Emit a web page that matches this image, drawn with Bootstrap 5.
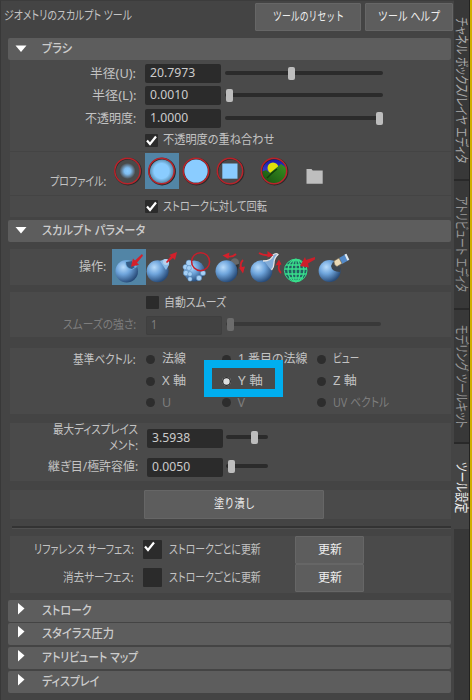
<!DOCTYPE html>
<html lang="ja">
<head>
<meta charset="utf-8">
<meta name="viewport" content="width=device-width, initial-scale=1">
<title>ジオメトリのスカルプト ツール</title>
<link href="https://cdn.jsdelivr.net/npm/bootstrap@5.3.0/dist/css/bootstrap.min.css" rel="stylesheet">
<style>
body{background:#444;color:#c3c3c3;font:12.5px/18px "Noto Sans","Noto Sans CJK JP",sans-serif;font-feature-settings:"palt";width:472px;height:700px;overflow:hidden}
.panel{width:454px;border-left:1px solid #383838;border-top:1px solid #3c3c3c}
.tool-head{height:37px;padding:2px 1px 0 3px}
.fit{display:inline-block;white-space:nowrap;transform-origin:0 50%}
.btn-tool{--bs-btn-color:#eee;--bs-btn-bg:#5d5d5d;--bs-btn-border-color:#666;--bs-btn-border-radius:1px;--bs-btn-padding-x:0;--bs-btn-padding-y:0;--bs-btn-font-size:12.5px;--bs-btn-line-height:18px;height:28px;display:flex;align-items:center;justify-content:center}
.w-reset{width:106px}.w-help{width:88px}.w-fill{width:180px;height:29px;margin-left:134px}.w-upd{width:69px;margin-left:34px}
.sec{height:22px;margin:0 3px 0 7px;background:#5d5d5d;border-radius:2px;font-weight:500;color:#ccc}
.sec svg{width:12px;height:12px;margin:0 15px 0 7px;fill:#fff}
.sec+.sec{margin-top:1.7px}
.sec svg.side-arrow{margin-top:-4px}
.grp{margin:0 3px 0 9px;background:#4a4a4a}
.lab{width:126px;text-align:right;flex:none}
.lab.lower{width:128px}
.fld{width:76px;height:19px;margin-left:9px;padding-left:5px;background:#2b2b2b;border-radius:2px;line-height:18px;color:#ccc;flex:none}
.line{height:22.5px}
.slide{width:158px;height:4px;margin-left:4px;margin-top:-2px;background:#2b2b2b;border-radius:2px;position:relative}
.slide.short{width:42px;margin-left:3px}
.knob{position:absolute;top:-4px;width:7px;height:13px;border-radius:2px;background:#bdbdbd}
.box{width:13px;height:13px;background:#2b2b2b;border-radius:1px;flex:none}
.box.big{width:19px;height:19px;margin-left:9px}
.box svg{display:block;width:13px;height:13px;fill:none;stroke:#fff;stroke-width:2.2}
.cut{border-top:1px solid #444}
.opt{height:23px;padding-left:135px}
.opt .box{margin-top:-2px}
.opt .fit,.optxt{margin-left:5px}
.opt .fit{margin-top:-2px}
.opt.cut{height:22px}
.opt.cut .box,.opt.cut .fit{margin-top:1px}
.profile{height:44px}
.profile svg{width:34px;height:36px;flex:none}
.pf{width:96px;padding-top:21px}
.pics{padding:1px 0 0 5px}
.pics .pattern{margin-left:10px}
.pics .folder{margin-left:1px}
.picked{background:#5285a6}
.ops{height:36px}
.ops svg{width:34.4px;height:36px;flex:none;overflow:visible}
.dim{color:#7d7d7d}
.dim .fld{background:#424242;color:#808080;box-shadow:inset 0 0 0 1px #3f3f3f}
.dim .knob{background:#6c6c6c}.dim .slide{background:#393939;width:155px}
.radios{display:grid;grid-template-columns:75.5px 95px 110px;grid-template-rows:repeat(3,21.7px);margin-left:10px;padding-top:1px}
.radios>div{display:flex;align-items:center}
.dot{width:9px;height:9px;border-radius:50%;background:#2d2d2d;margin-right:7px;flex:none}
.dot.on{background:#ddd;box-shadow:inset 0 0 0 1.3px #2b2b2b}
.marker{position:absolute;left:204px;top:360px;width:79px;height:37px;border:8px solid #00aeef}
.sculpt{margin-top:3px}
.opsgrp{margin-top:7px}
.oplab{width:96px;padding-top:9px;margin-right:6px}
.smooth{margin-top:7px;height:45px}
.smooth .box{margin-left:136px}
.smooth .fld{margin-left:10px}
.vectors{margin-top:11px;height:66px}
.vectors>.lab{padding-top:3px}
.limits{margin-top:9px;height:58px}
.row1{height:31px}
.row1 .lab{display:flex;flex-direction:column;align-items:flex-end}
.row1 .lab .fit{line-height:16px}
.row2{height:27px}
.flood{margin-top:9px;height:29px}
.rule{height:3px;background:#333;margin:7px 3px 0 11px;border-bottom:1px solid #505050}
.surfaces{margin-top:7px;height:57px}
.srf{height:28px}
.slab{width:124px}
.stxt{margin-left:7px}
.closed{margin-top:7px}
.tabs{width:15px;background:#383838}
.side{writing-mode:vertical-rl;text-orientation:sideways;width:15px;line-height:15px;font-size:13.5px;color:#999;border-bottom:2px solid #292929}
.side .fit{transform-origin:50% 0}
.t1{height:181px;padding-top:17px;color:#aaa}
.t2{height:129px;padding-top:15px}
.t3{height:134px;padding-top:15px}
.t4{height:85px;padding-top:18px;background:#444;color:#eee;border:0}
.edge{width:3px;background:#d0b000;border-left:1px solid #222}
</style>
<script src="https://cdn.jsdelivr.net/npm/bootstrap@5.3.0/dist/js/bootstrap.bundle.min.js"></script>
</head>
<body class="d-flex position-relative">
<svg width="0" height="0" class="position-absolute">
<defs>
<radialGradient id="ball" cx=".35" cy=".32" r=".7"><stop offset="0" stop-color="#b9dcfb"/><stop offset=".45" stop-color="#6fa5dc"/><stop offset="1" stop-color="#284b78"/></radialGradient>
<radialGradient id="soft"><stop offset="0" stop-color="#8accff"/><stop offset=".4" stop-color="#80bdf0"/><stop offset="1" stop-color="#80bdf0" stop-opacity="0"/></radialGradient>
<radialGradient id="wide"><stop offset="0" stop-color="#8accff"/><stop offset=".6" stop-color="#8accff"/><stop offset="1" stop-color="#8accff" stop-opacity="0"/></radialGradient>
<linearGradient id="sky" x2="0" y2="1"><stop offset="0" stop-color="#1414a8"/><stop offset="1" stop-color="#5b63ee"/></linearGradient>
<linearGradient id="hill" x1="1" x2="0" y2="1"><stop offset="0" stop-color="#3a9420"/><stop offset="1" stop-color="#154c10"/></linearGradient>
<clipPath id="disc"><circle cx="17" cy="18" r="12.5"/></clipPath>
<g id="ring" fill="none"><circle cx="17.6" cy="18.6" r="13" stroke="#292929" stroke-width="1.6"/><circle cx="17" cy="18" r="12.7" stroke="#b9242b" stroke-width="1.5"/></g>
</defs>
</svg>
<main class="panel flex-shrink-0">
<header class="tool-head d-flex align-items-start">
<div class="pt-1"><span class="fit" data-w="128">ジオメトリのスカルプト ツール</span></div>
<div class="d-flex ms-auto gap-1"><button class="btn btn-tool w-reset"><span class="fit" data-w="71">ツールのリセット</span></button><button class="btn btn-tool w-help"><span class="fit" data-w="62">ツール ヘルプ</span></button></div>
</header>
<div class="sec d-flex align-items-center"><svg viewBox="0 0 12 12"><path d="M.5 2.5h11L6 9z"/></svg><span class="fit" data-w="30">ブラシ</span></div>
<section class="grp brush pt-0">
<div class="line d-flex align-items-end"><div class="lab"><span class="fit" data-w="46">半径(U):</span></div><div class="fld"><span class="fit" data-w="45">20.7973</span></div><div class="slide mb-2"><i class="knob" style="left:63px"></i></div></div>
<div class="line d-flex align-items-end"><div class="lab"><span class="fit" data-w="44">半径(L):</span></div><div class="fld"><span class="fit" data-w="38">0.0010</span></div><div class="slide mb-2"><i class="knob" style="left:1px"></i></div></div>
<div class="line d-flex align-items-end"><div class="lab"><span class="fit" data-w="51">不透明度:</span></div><div class="fld"><span class="fit" data-w="38">1.0000</span></div><div class="slide mb-2"><i class="knob" style="left:151px"></i></div></div>
<div class="opt d-flex align-items-center pt-1"><div class="box"><svg viewBox="0 0 13 13"><path d="M2 6.5 5 10l6-7.5"/></svg></div><span class="fit" data-w="111">不透明度の重ね合わせ</span></div>
<div class="profile cut d-flex"><div class="lab pf"><span class="fit" data-w="56">プロファイル:</span></div>
<div class="d-flex pics">
<svg viewBox="0 0 34 36"><circle cx="16.5" cy="18" r="8" fill="url(#soft)"/><use href="#ring" x="-.5"/></svg>
<svg class="picked" viewBox="0 0 34 36"><circle cx="16.5" cy="18" r="12.5" fill="url(#wide)"/><use href="#ring" x="-.5"/></svg>
<svg viewBox="0 0 34 36"><use href="#ring"/><circle cx="17" cy="18" r="11.6" fill="#8accff"/></svg>
<svg viewBox="0 0 34 36"><use href="#ring"/><path fill="#8accff" d="M9.3 10.5h15.2v15.2H9.3z"/></svg>
<svg class="pattern" viewBox="0 0 34 36"><g clip-path="url(#disc)"><path fill="url(#sky)" d="M4 5h27v27H4z"/><circle cx="16" cy="15" r="5.5" fill="#dde00b"/><path fill="url(#hill)" d="m4 19 5-2 4 3L24 11l7 5v16H4z"/><path stroke="#123f0d" stroke-width="1.4" d="m10 25 5-5 5-4"/></g><use href="#ring"/></svg>
<svg class="folder" viewBox="0 0 34 36"><path fill="#bebebe" d="M14.5 16h5l1.2 1.5h10v13.2H14.5z"/></svg>
</div></div>
<div class="opt cut d-flex align-items-center"><div class="box"><svg viewBox="0 0 13 13"><path d="M2 6.5 5 10l6-7.5"/></svg></div><span class="fit" data-w="104">ストロークに対して回転</span></div>
</section>
<div class="sec sculpt d-flex align-items-center"><svg viewBox="0 0 12 12"><path d="M.5 2h11L6 8.5z"/></svg><span class="fit" data-w="103">スカルプト パラメータ</span></div>
<section class="grp opsgrp"><div class="ops d-flex"><div class="lab oplab"><span class="fit" data-w="27">操作:</span></div>
<svg class="picked" viewBox="0 0 34.4 36"><circle cx="14.7" cy="22.3" r="11.3" fill="url(#ball)"/><path fill="#6faede" d="M13 12q9-2 12 6l-6 3q-6-2-6-9"/><path fill="#355b86" d="M14 13q0 6 6 7l3-2q-3-1-3-6z"/><path fill="#d3202b" d="m30 5-7 6.4-2-1.8-2 8.1 8-2-2-1.9 6-7z"/></svg>
<svg viewBox="0 0 34.4 36"><circle cx="11.6" cy="22.3" r="11" fill="url(#ball)"/><path fill="#8bbde9" d="m14 12 5-2q5 0 4 6l-3 5z"/><circle cx="20" cy="13" r="3" fill="#b8d2ec"/><path fill="#d3202b" d="m20 13 5-6-2-1 8-3-2 8-2-2-6 5z"/></svg>
<svg viewBox="0 0 34.4 36"><circle cx="13.2" cy="22" r="10.5" fill="url(#ball)"/><g fill="#a5d0f6" stroke="#5182b3" stroke-width=".5"><circle cx="8" cy="14" r="3"/><circle cx="4.5" cy="18" r="2.6"/><circle cx="8" cy="19" r="2.5"/><circle cx="5" cy="24" r="2.7"/><circle cx="9" cy="25" r="2.3"/><circle cx="9" cy="30" r="2.2"/><circle cx="18" cy="29" r="2.7"/><circle cx="22" cy="24" r="2.6"/></g><circle cx="19.6" cy="12.7" r="9" fill="none" stroke="#c71f2b" stroke-width="1.5"/></svg>
<svg viewBox="0 0 34.4 36"><circle cx="19.8" cy="13.5" r="4.2" fill="#686868"/><path fill="#303030" d="m20 16 4-1-2 12z"/><circle cx="11.5" cy="22.3" r="11" fill="url(#ball)"/><g fill="none" stroke="#d3202b" stroke-width="1.8"><path d="M21 5q-4 4-10 2M28 11q-4 4-1 10"/></g><path fill="#d3202b" d="m7.5 6.5 7-3-1 6.500zM24 18.500l6-1-2 7z"/></svg>
<svg viewBox="0 0 34.4 36"><circle cx="11.4" cy="22.3" r="11" fill="url(#ball)"/><path fill="#83acd7" d="M14 12q8 0 9-6 3-2 5 0-4 3-4 8 0 4-3 7z"/><path fill="none" stroke="#e4e4e4" stroke-width="1.3" d="M13 12q9 0 10-6 3-2.500 5-.5-4 3.500-4 8.500 0 4-2.500 7"/><g fill="none" stroke="#d3202b" stroke-width="1.8"><path d="M9 4q5 3 11 2M31 24q-4-4-1-10"/></g><path fill="#d3202b" d="m23.500 6.500-6-4.500v6.500zM29 10.500l-3.500 6 6-1z"/></svg>
<svg viewBox="0 0 34.4 36"><circle cx="11.7" cy="21.5" r="11.3" fill="#245e61" stroke="#36de8a"/><g fill="none" stroke="#39df8c" stroke-width="1.3"><path d="M12 10v23M2 16h20M1 20h22M1 25h21M5 29h14"/><ellipse cx="12" cy="21.5" rx="8" ry="11"/><ellipse cx="12" cy="21.5" rx="4" ry="11"/></g><path fill="#cc1f2a" d="m31 8-9 3-1-3-5 9 9 1.500-1-4 7-4z"/></svg>
<svg viewBox="0 0 34.4 36"><circle cx="11.6" cy="22" r="11" fill="url(#ball)"/><path fill="#3d454f" d="M15 13q4 1 8 6l-1 4q-8 0-9-6z"/><path fill="#548ac8" d="m21 9 7-4 3 6-7 4z"/><path fill="#dfe8ef" d="m26.500 5.500 2-.8 2.800 6-2 .8z"/><path fill="#ead9b6" stroke="#6a624f" stroke-width=".6" d="m16 12 5-3 3 5.500-5 3q-3-1-3-5.500z"/></svg>
</div></section>
<section class="grp smooth">
<div class="line d-flex align-items-center"><div class="box"></div><span class="fit optxt" data-w="62">自動スムーズ</span></div>
<div class="line dim d-flex align-items-center"><div class="lab"><span class="fit" data-w="73">スムーズの強さ:</span></div><div class="fld"><span class="fit" data-w="6">1</span></div><div class="slide"><i class="knob" style="left:1px"></i></div></div>
</section>
<section class="grp vectors d-flex"><div class="lab"><span class="fit" data-w="63">基準ベクトル:</span></div>
<div class="radios">
<div><i class="dot"></i><span class="fit" data-w="24">法線</span></div><div><i class="dot"></i><span class="fit" data-w="69">1 番目の法線</span></div><div><i class="dot"></i><span class="fit" data-w="26">ビュー</span></div>
<div><i class="dot"></i><span class="fit" data-w="24">X 軸</span></div><div><i class="dot on"></i><span class="fit" data-w="25">Y 軸</span></div><div><i class="dot"></i><span class="fit" data-w="24">Z 軸</span></div>
<div class="dim"><i class="dot"></i><span class="fit" data-w="9">U</span></div><div class="dim"><i class="dot"></i><span class="fit" data-w="8">V</span></div><div class="dim"><i class="dot"></i><span class="fit" data-w="56">UV ベクトル</span></div>
</div></section>
<section class="grp limits">
<div class="row1 d-flex align-items-center"><div class="lab lower"><span class="fit" data-w="85">最大ディスプレイス</span><span class="fit" data-w="29">メント:</span></div><div class="fld"><span class="fit" data-w="38">3.5938</span></div><div class="slide short"><i class="knob" style="left:25px"></i></div></div>
<div class="row2 d-flex align-items-center"><div class="lab lower"><span class="fit" data-w="90">継ぎ目/極許容値:</span></div><div class="fld"><span class="fit" data-w="38">0.0050</span></div><div class="slide short"><i class="knob" style="left:2px"></i></div></div>
</section>
<section class="grp flood"><button class="btn btn-tool w-fill"><span class="fit" data-w="41">塗り潰し</span></button></section>
<div class="rule"></div>
<section class="grp surfaces">
<div class="srf d-flex align-items-center"><div class="lab slab"><span class="fit" data-w="100">リファレンス サーフェス:</span></div><div class="box big"><svg viewBox="0 0 13 13"><path d="M2 6.5 5 10l6-7.5"/></svg></div><span class="fit stxt" data-w="92">ストロークごとに更新</span><button class="btn btn-tool w-upd"><span class="fit" data-w="24">更新</span></button></div>
<div class="srf d-flex align-items-center"><div class="lab slab"><span class="fit" data-w="71">消去サーフェス:</span></div><div class="box big"></div><span class="fit stxt" data-w="92">ストロークごとに更新</span><button class="btn btn-tool w-upd"><span class="fit" data-w="24">更新</span></button></div>
</section>
<div class="sec closed d-flex align-items-center"><svg class="side-arrow" viewBox="0 0 12 12"><path d="M3 0v11.500l6.500-6z"/></svg><span class="fit" data-w="50">ストローク</span></div>
<div class="sec d-flex align-items-center"><svg class="side-arrow" viewBox="0 0 12 12"><path d="M3 0v11.500l6.500-6z"/></svg><span class="fit" data-w="72">スタイラス圧力</span></div>
<div class="sec d-flex align-items-center"><svg class="side-arrow" viewBox="0 0 12 12"><path d="M3 0v11.500l6.500-6z"/></svg><span class="fit" data-w="96">アトリビュート マップ</span></div>
<div class="sec d-flex align-items-center"><svg class="side-arrow" viewBox="0 0 12 12"><path d="M3 0v11.500l6.500-6z"/></svg><span class="fit" data-w="57">ディスプレイ</span></div>
</main>
<nav class="tabs d-flex flex-column flex-shrink-0">
<div class="side t1"><span class="fit" data-h="146">チャネル ボックス/レイヤ エディタ</span></div>
<div class="side t2"><span class="fit" data-h="96">アトリビュート エディタ</span></div>
<div class="side t3"><span class="fit" data-h="103">モデリング ツールキット</span></div>
<div class="side t4"><span class="fit" data-h="51">ツール設定</span></div>
</nav>
<div class="edge flex-shrink-0"></div>
<div class="marker"></div>
<script>
document.querySelectorAll('.fit').forEach(function(e){
  var v=e.dataset.h, want=+(v||e.dataset.w), have=v?e.offsetHeight:e.offsetWidth, k=want/have;
  e.style.transform=v?'scaleY('+k+')':'scaleX('+k+')';
  if(v) e.style.height=want+'px'; else {e.style.width=want+'px';e.style.textAlign='left';}
});
</script>
</body>
</html>
